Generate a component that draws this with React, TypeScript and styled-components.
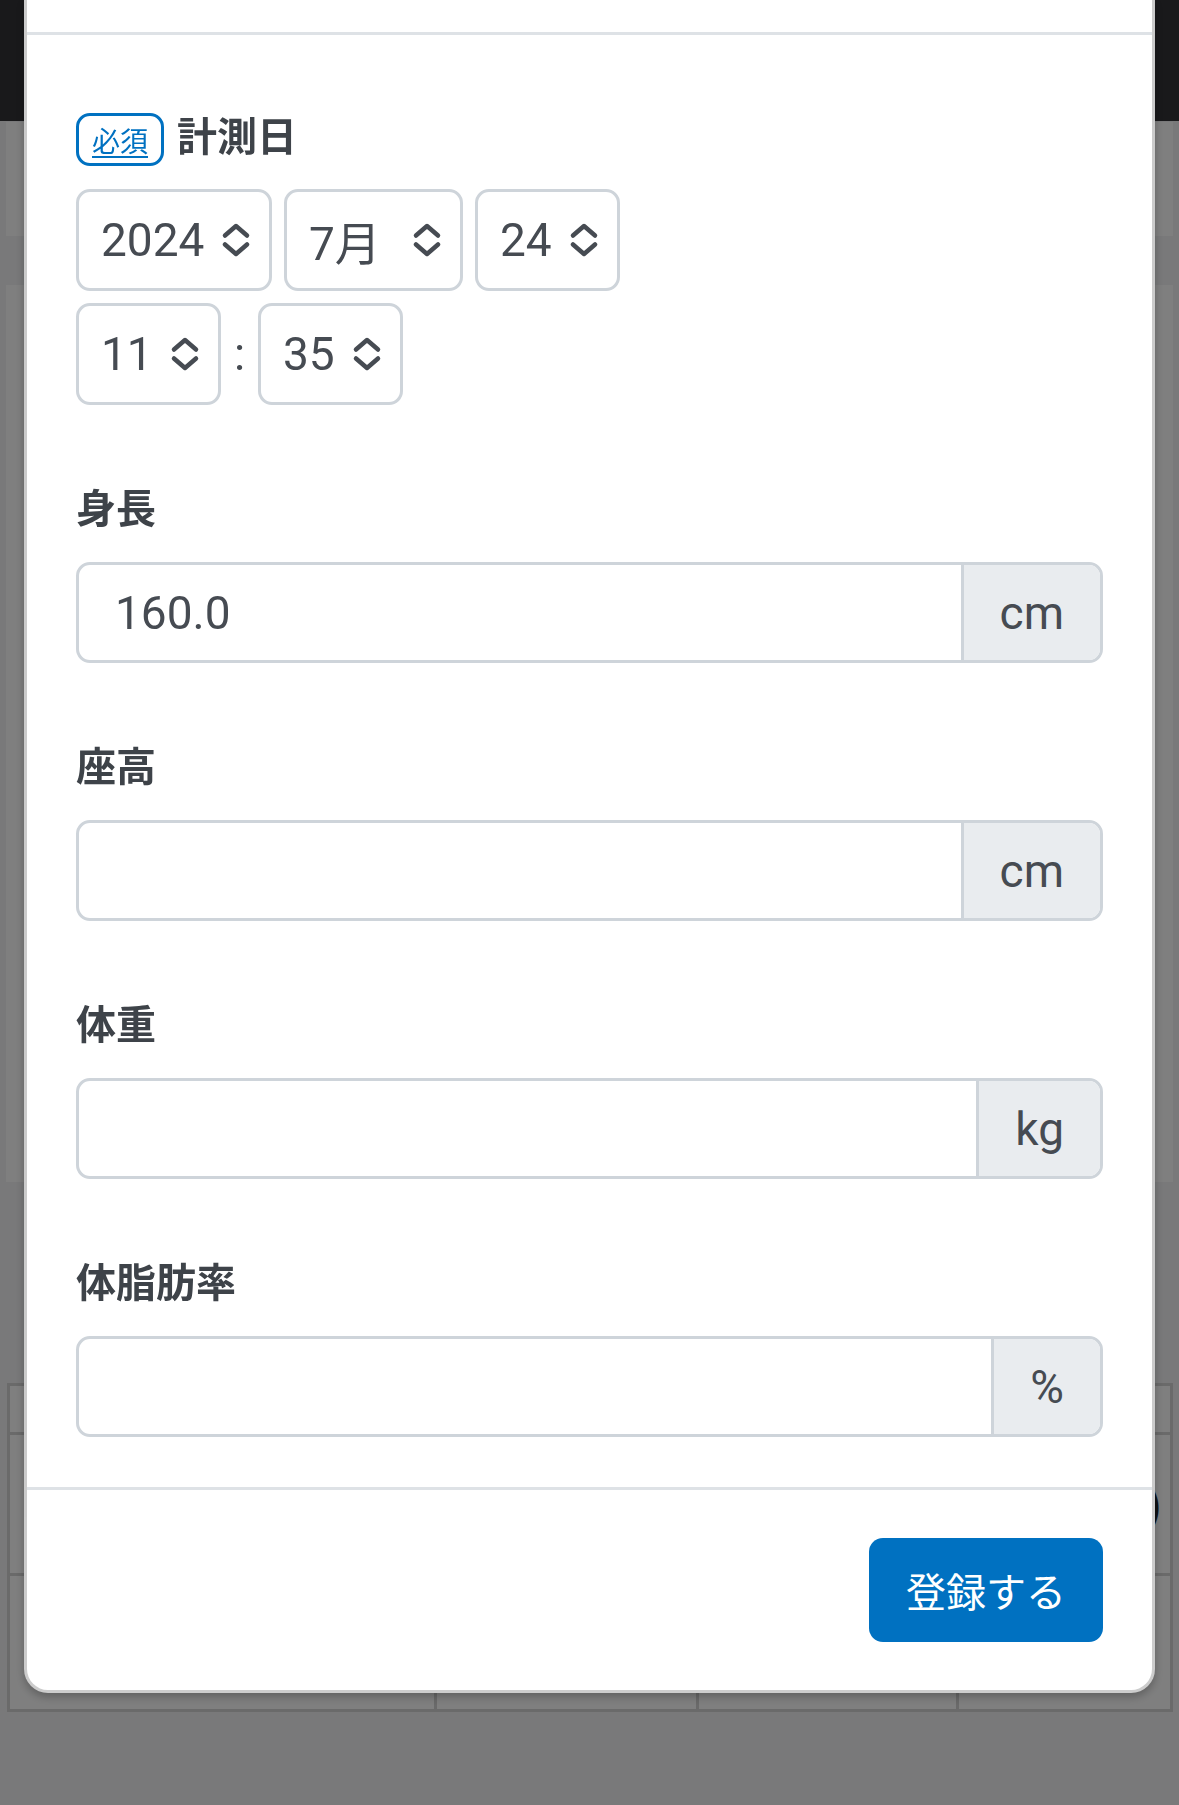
import React from "react";
import styled, { createGlobalStyle } from "styled-components";

const GlobalStyle = createGlobalStyle`
  html, body {
    margin: 0;
    padding: 0;
  }
  body {
    font-family: Roboto, "Noto Sans CJK JP", sans-serif;
    background: #f2f3f5;
  }
  * {
    box-sizing: border-box;
  }
`;

/* ---------- page behind the modal ---------- */

const Page = styled.div`
  min-height: 1805px;
  background: #f2f3f5;
  display: flex;
  flex-direction: column;
`;

const NavBar = styled.header`
  height: 121px;
  background: #323236;
`;

const Card = styled.section<{ $gap: number; $height: number }>`
  margin: ${(p) => p.$gap}px 6px 0;
  height: ${(p) => p.$height}px;
  background: #fff;
`;

const Table = styled.div`
  margin: 201px 6px 0 7px;
  display: grid;
  grid-template-columns: 427px 262px 260px 1fr;
  grid-template-rows: 49px 141px 136px;
  background: #fff;
  border-left: 3px solid #d4d4d4;
  border-bottom: 3px solid #d4d4d4;
`;

const Cell = styled.div<{ $right?: boolean }>`
  border-right: 3px solid #d4d4d4;
  border-top: 3px solid #d4d4d4;
  display: flex;
  align-items: center;
  justify-content: ${(p) => (p.$right ? "flex-end" : "flex-start")};
  padding: 0 8px;
  font-family: "Noto Sans CJK JP", sans-serif;
  font-size: 40px;
  font-weight: 700;
  color: #222;
  white-space: nowrap;
`;

/* ---------- modal ---------- */

const Backdrop = styled.div`
  position: fixed;
  inset: 0;
  background: rgba(0, 0, 0, 0.5);
  padding: 0 24px;
`;

const Modal = styled.div`
  background: #fff;
  border: 3px solid rgba(0, 0, 0, 0.2);
  border-top: none;
  border-radius: 0 0 24px 24px;
  box-shadow: 0 4px 8px rgba(0, 0, 0, 0.25);
  display: flex;
  flex-direction: column;
`;

const ModalHeader = styled.div`
  height: 35px;
  border-bottom: 3px solid #dee2e6;
`;

const ModalBody = styled.div`
  padding: 73px 49px 50px;
`;

const DateLabelRow = styled.div`
  display: flex;
  align-items: center;
  gap: 13px;
  height: 63px;
  margin-bottom: 18px;
`;

const Badge = styled.span`
  display: inline-flex;
  align-items: center;
  justify-content: center;
  height: 53px;
  padding: 0 13px;
  border: 3px solid #0071c1;
  border-radius: 14px;
  color: #0071c1;
  font-family: "Noto Sans CJK JP", sans-serif;
  font-size: 28px;
  line-height: 1;
  text-decoration: underline;
  text-underline-offset: 4px;
`;

const LabelText = styled.span`
  font-family: "Noto Sans CJK JP", sans-serif;
  font-size: 40px;
  font-weight: 700;
  line-height: 63px;
  color: #3e4349;
  margin-bottom: 11px;
`;

const SelectRow = styled.div`
  display: flex;
  align-items: center;
  gap: 12px;
  & + & {
    margin-top: 12px;
  }
`;

const SelectBox = styled.div<{ $width: number }>`
  width: ${(p) => p.$width}px;
  height: 102px;
  border: 3px solid #ced4da;
  border-radius: 14px;
  padding: 0 18px 0 22px;
  display: flex;
  align-items: center;
  justify-content: space-between;
  font-size: 46px;
  color: #464b52;
`;

const ChevronIcon = styled.svg`
  flex: none;
  width: 30px;
  height: 34px;
`;

const Colon = styled.span`
  font-size: 46px;
  color: #464b52;
  width: 13px;
  text-align: center;
`;

const Field = styled.div`
  margin-top: 70px;
`;

const FieldLabel = styled.label`
  display: block;
  font-family: "Noto Sans CJK JP", sans-serif;
  font-size: 40px;
  font-weight: 700;
  line-height: 63px;
  margin-bottom: 24px;
  color: #3e4349;
`;

const InputGroup = styled.div`
  display: flex;
  height: 101px;
  border: 3px solid #ced4da;
  border-radius: 14px;
  overflow: hidden;
`;

const TextInput = styled.input`
  flex: 1;
  min-width: 0;
  border: none;
  outline: none;
  background: transparent;
  padding: 0 36px;
  font-family: inherit;
  font-size: 46px;
  color: #464b52;
`;

const Addon = styled.span`
  display: flex;
  align-items: center;
  padding: 0 36px;
  background: #e9ecef;
  border-left: 3px solid #ced4da;
  font-size: 46px;
  color: #464b52;
`;

const ModalFooter = styled.div`
  border-top: 3px solid #dee2e6;
  padding: 48px 49px;
  display: flex;
  justify-content: flex-end;
`;

const SubmitButton = styled.button`
  height: 104px;
  padding: 0 37px;
  border: none;
  border-radius: 14px;
  background: #0071c1;
  color: #fff;
  font-family: "Noto Sans CJK JP", sans-serif;
  font-size: 40px;
  cursor: pointer;
`;

const UpDown = () => (
  <ChevronIcon viewBox="0 0 30 34" fill="none" stroke="#464b52" strokeWidth="4.5" strokeLinecap="round" strokeLinejoin="round">
    <path d="M4 12.5 L15 3 L26 12.5" />
    <path d="M4 21.5 L15 31 L26 21.5" />
  </ChevronIcon>
);

const Select = ({ value, width }: { value: string; width: number }) => (
  <SelectBox $width={width}>
    <span>{value}</span>
    <UpDown />
  </SelectBox>
);

const fields = [
  { label: "身長", unit: "cm", value: "160.0" },
  { label: "座高", unit: "cm", value: "" },
  { label: "体重", unit: "kg", value: "" },
  { label: "体脂肪率", unit: "%", value: "" },
];

const App = () => {
  return (
    <>
      <GlobalStyle />
      <Page>
        <NavBar />
        <Card $gap={1} $height={114} />
        <Card $gap={49} $height={897} />
        <Table>
          <Cell />
          <Cell />
          <Cell />
          <Cell />
          <Cell />
          <Cell />
          <Cell />
          <Cell $right>率(%)</Cell>
          <Cell />
          <Cell />
          <Cell />
          <Cell />
        </Table>
      </Page>
      <Backdrop>
        <Modal>
          <ModalHeader />
          <ModalBody>
            <DateLabelRow>
              <Badge>必須</Badge>
              <LabelText>計測日</LabelText>
            </DateLabelRow>
            <SelectRow>
              <Select value="2024" width={196} />
              <Select value="7月" width={179} />
              <Select value="24" width={145} />
            </SelectRow>
            <SelectRow>
              <Select value="11" width={145} />
              <Colon>:</Colon>
              <Select value="35" width={145} />
            </SelectRow>
            {fields.map((f) => (
              <Field key={f.label}>
                <FieldLabel>{f.label}</FieldLabel>
                <InputGroup>
                  <TextInput type="text" inputMode="decimal" defaultValue={f.value} />
                  <Addon>{f.unit}</Addon>
                </InputGroup>
              </Field>
            ))}
          </ModalBody>
          <ModalFooter>
            <SubmitButton type="button">登録する</SubmitButton>
          </ModalFooter>
        </Modal>
      </Backdrop>
    </>
  );
};

export default App;
